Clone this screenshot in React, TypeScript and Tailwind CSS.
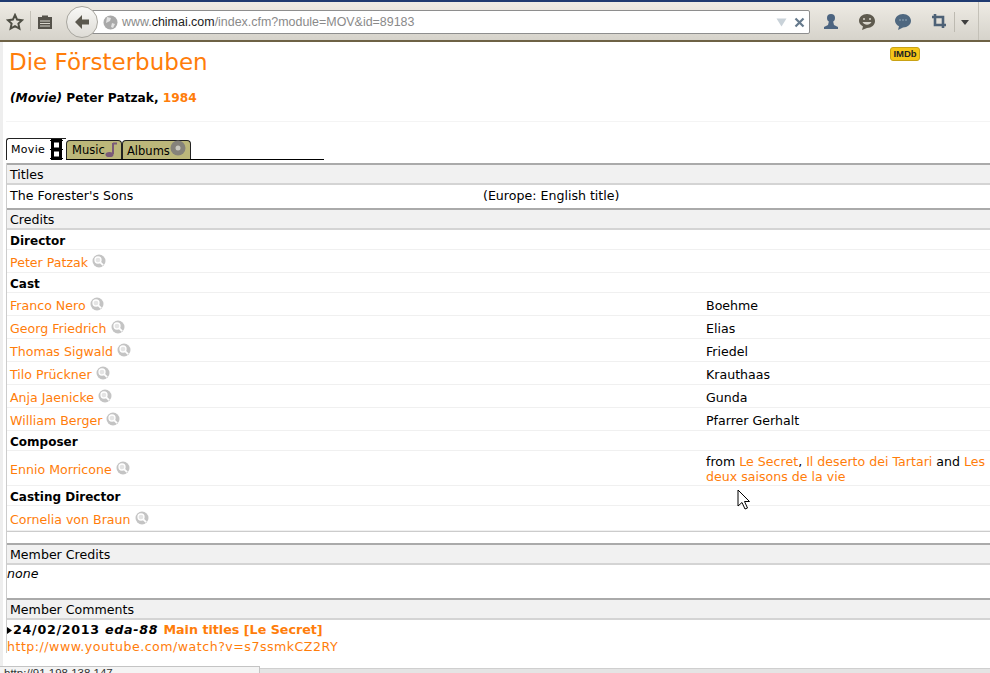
import { ReactNode } from 'react';

const orange = 'text-[#ff7d0a]';

function Lens() {
  return (
    <svg className="absolute top-[-13px] left-[4px]" width="14" height="14" viewBox="0 0 14 14">
      <circle cx="7" cy="7" r="6.5" fill="#c4c4c4" />
      <circle cx="6" cy="6" r="3" fill="#e4e4e4" stroke="#fff" strokeWidth="1.3" />
      <path d="M8.3 8.3l2.8 2.8" stroke="#fff" strokeWidth="1.8" />
    </svg>
  );
}

function Person({ name, role, h = 'h-[23px]', roleTop = 'pt-[3px]' }: { name: string; role?: ReactNode; h?: string; roleTop?: string }) {
  return (
    <div className={`flex items-center border-b border-[#f0f0f0] ${h}`}>
      <div className="w-[699px] pl-[3px] shrink-0 pt-[5px]">
        <span className={`relative ${orange}`}>
          {name}
          <span className="relative inline-block w-[14px]"><Lens /></span>
        </span>
      </div>
      <div className={`leading-[15px] ${roleTop}`}>{role}</div>
    </div>
  );
}

function Group({ label }: { label: string }) {
  return <div className="h-[20px] pl-[3px] pt-[1px] leading-[20px] text-[12px] font-bold border-b border-[#f0f0f0]">{label}</div>;
}

function Header({ label }: { label: string }) {
  return (
    <div className="h-[22px] pl-[3px] leading-[19px] bg-[#f1f1f1] border-t-2 border-b-2 border-t-[#aaaaaa] border-b-[#d4d4d4]">
      {label}
    </div>
  );
}

function Toolbar() {
  return (
    <div className="h-[42px] bg-gradient-to-b from-[#eeebe4] to-[#d6d3cb] border-t-2 border-t-[#1f3a70] border-b-2 border-b-[#6e6245] flex items-center relative overflow-visible">
      <svg className="ml-[6px] mt-[1px]" width="18" height="18" viewBox="0 0 18 18">
        <path d="M9 2l2.1 4.6 5 .6-3.7 3.4 1 5L9 13.1 4.6 15.6l1-5L1.900 7.200l5-.6z" fill="none" stroke="#4e4e44" strokeWidth="2" />
      </svg>
      <div className="w-px h-[20px] bg-[#c4c1b8] ml-[6px]" />
      <svg className="ml-[6px] mt-[1px]" width="16" height="16" viewBox="0 0 16 16">
        <path d="M1 3h14v12H1z" fill="#55524a" />
        <path d="M5 1.500h6v3H5z" fill="#55524a" />
        <path d="M3 7h10M3 9.500h10M3 12h10" stroke="#d8d5cc" strokeWidth="1" />
      </svg>
      <div className="absolute left-[90px] top-[8px] w-[720px] h-[24px] bg-white border border-[#8e8e8e] rounded-[2px] flex items-center pl-[12px] text-[12.450px] font-['Liberation_Sans',sans-serif] text-[#8a8a8a]">
        <svg width="15" height="15" viewBox="0 0 15 15">
          <circle cx="7.500" cy="7.500" r="7" fill="#a9a9a9" />
          <path d="M4 2l4 1-1 3-4 2zM9 8l3 1-2 4-2-1z" fill="#e2e2e2" />
        </svg>
        <span className="ml-[4px]">www.<span className="text-[#222]">chimai.com</span>/index.cfm?module=MOV&amp;id=89183</span>
        <svg className="absolute left-[685px] top-[7px]" width="11" height="9" viewBox="0 0 11 9">
          <path d="M0.500 0.500h10L5.500 8.500z" fill="#c9d2d9" />
        </svg>
        <svg className="absolute left-[703px] top-[6px]" width="11" height="11" viewBox="0 0 11 11">
          <path d="M1.500 1.500l8 8M9.500 1.500l-8 8" stroke="#65798c" strokeWidth="2.200" />
        </svg>
      </div>
      <div className="absolute left-[66px] top-[4px] w-[32px] h-[32px] rounded-full bg-gradient-to-b from-[#f8f8f6] to-[#dedcd6] border border-[#a8a69f] flex items-center justify-center">
        <svg width="18" height="16" viewBox="0 0 18 16">
          <path d="M9 1L2 8l7 7V10.500h7v-5H9z" fill="#5b584e" />
        </svg>
      </div>
      <svg className="absolute left-[823px] top-[11px]" width="16" height="17" viewBox="0 0 16 17">
        <circle cx="8" cy="5" r="4" fill="#4c6480" />
        <path d="M6 8h4l1 4 4 2v2H1v-2l4-2z" fill="#4c6480" />
      </svg>
      <svg className="absolute left-[858px] top-[11px]" width="18" height="18" viewBox="0 0 18 18">
        <path d="M9 1c4.500 0 8 3 8 7s-3.500 7-8 7l-5 2 1-3.500C2.500 12 1 10.300 1 8c0-4 3.500-7 8-7z" fill="#5e5a4e" />
        <path d="M5 6h2M11 6h2" stroke="#d8d5cc" strokeWidth="1.500" />
        <path d="M4.500 9c2 3.500 7 3.500 9 0z" fill="#d8d5cc" />
      </svg>
      <svg className="absolute left-[894px] top-[11px]" width="18" height="18" viewBox="0 0 18 18">
        <path d="M9 1c4.500 0 8 3 8 6.800s-3.500 6.700-8 6.700l-5 2.500 1-3.700C2.500 12 1 10 1 7.800 1 4 4.500 1 9 1z" fill="#4f6880" />
        <path d="M5.500 7h1M8.500 7h1M11.500 7h1" stroke="#a8bac8" strokeWidth="1.500" />
      </svg>
      <svg className="absolute left-[931px] top-[11px]" width="16" height="17" viewBox="0 0 16 17">
        <path d="M4 1v11h11M1 4h11v11" fill="none" stroke="#4d6176" strokeWidth="2.600" />
      </svg>
      <div className="absolute left-[954px] top-[10px] w-px h-[20px] bg-[#bdbab1]" />
      <svg className="absolute left-[961px] top-[18px]" width="8" height="5" viewBox="0 0 8 5">
        <path d="M0 0h8L4 5z" fill="#3f3f3f" />
      </svg>
      <div className="absolute left-[978px] top-[0px] w-px h-[38px] bg-[#c4c1b8]" />
    </div>
  );
}

function Tabs() {
  return (
    <div className="w-[318px] h-[22px] border-b border-black flex items-end">
      <div className="w-[60px] h-[22px] mb-[-1px] bg-white border-t border-l border-[#222] rounded-tl-[3px] relative pl-[4px] text-[11px] leading-[22px] tracking-[0.3px]">
        Movie
        <svg className="absolute left-[43px] top-[0px]" width="13" height="21" viewBox="0 0 13 21">
          <path d="M1 0h11v21H1z" fill="#000" />
          <path d="M4 3.500h5v5H4zM4 12.500h5v5H4z" fill="#fff" />
          <path d="M0 1.500h1M12 1.500h1M0 10.500h1M12 10.500h1M0 19.500h1M12 19.500h1" stroke="#000" />
        </svg>
      </div>
      <div className="w-[56px] h-[19px] bg-[#bcb77a] border border-b-0 border-[#222] rounded-t-[4px] relative pl-[5px] text-[11.500px] leading-[18px]">
        Music
        <svg className="absolute left-[38px] top-[1px]" width="13" height="16" viewBox="0 0 13 16">
          <path d="M8 1.500h4M8 1v11" stroke="#7a5a78" strokeWidth="2" fill="none" />
          <ellipse cx="4.500" cy="12.500" rx="4" ry="2.600" fill="#7a5a78" />
        </svg>
      </div>
      <div className="w-[69px] h-[19px] bg-[#bcb77a] border border-b-0 border-[#222] rounded-t-[4px] relative pl-[4px] text-[11.500px] leading-[20px]">
        Albums
        <svg className="absolute left-[47px] top-[-1px]" width="16" height="16" viewBox="0 0 16 16">
          <circle cx="8" cy="8" r="7.500" fill="#85827a" />
          <circle cx="8" cy="8" r="2.500" fill="#c9c8c0" />
        </svg>
      </div>
    </div>
  );
}

export default function App() {
  return (
    <div className="w-[990px] h-[673px] overflow-hidden relative bg-white text-black text-[12.600px] font-['DejaVu_Sans',Verdana,sans-serif]">
      <Toolbar />
      <div className="border-l-[3px] border-l-[#eeeeee] pl-[3px] h-[631px]">
        <div className="h-[96px] relative">
          <div className={`pl-[3px] pt-[6px] text-[23px] leading-[29px] ${orange}`}>
            Die Försterbuben
          </div>
          <div className="pl-[4px] mt-[13px] text-[12.200px] font-bold leading-[16px]">
            <span className="italic">(Movie)</span> Peter Patzak, <span className={orange}>1984</span>
          </div>
          <div className="absolute left-[884px] top-[5px] w-[30px] h-[14px] rounded-[3px] bg-[#f5c518] border border-[#c9a215] flex items-center justify-center text-[9.500px] font-bold leading-none text-[#222] font-['Liberation_Sans',sans-serif]">
            IMDb
          </div>
          <div className="absolute left-0 right-0 top-[79px] border-t border-[#f4f4f4]" />
        </div>

        <Tabs />

        <div className="mt-[3px] border-l border-[#cccccc]">
          <Header label="Titles" />
          <div className="h-[23px] flex items-center pl-[3px]">
            <div className="w-[473px]">The Forester's Sons</div>
            <div>(Europe: English title)</div>
          </div>
          <Header label="Credits" />
          <Group label="Director" />
          <Person name="Peter Patzak" />
          <Group label="Cast" />
          <Person name="Franco Nero" role="Boehme" />
          <Person name="Georg Friedrich" role="Elias" />
          <Person name="Thomas Sigwald" role="Friedel" />
          <Person name="Tilo Prückner" role="Krauthaas" />
          <Person name="Anja Jaenicke" role="Gunda" />
          <Person name="William Berger" role="Pfarrer Gerhalt" />
          <Group label="Composer" />
          <Person
            name="Ennio Morricone"
            h="h-[35px]"
            roleTop="pt-[1px]"
            role={
              <>
                from <span className={orange}>Le Secret</span>, <span className={orange}>Il deserto dei Tartari</span> and <span className={orange}>Les deux saisons de la vie</span>
              </>
            }
          />
          <Group label="Casting Director" />
          <Person name="Cornelia von Braun" h="h-[25px]" />
          <div className="h-[12px] border-t border-[#cccccc]" />
          <Header label="Member Credits" />
          <div className="h-[33px] italic leading-[18px]">none</div>
          <Header label="Member Comments" />
          <div className="font-bold text-[12.700px] leading-[20px] flex items-center">
            <svg width="5" height="7" viewBox="0 0 5 7"><path d="M0 0l5 3.500L0 7z" fill="#000" /></svg>
            <span className="ml-[1px] tracking-[0.7px]">24/02/2013 <span className="italic">eda-88</span></span>
            <span className={`ml-[5px] ${orange}`}>Main titles [Le Secret]</span>
          </div>
          <div className={`${orange} leading-[13px] tracking-[0.5px]`}>http://www.youtube.com/watch?v=s7ssmkCZ2RY</div>
        </div>
      </div>

      <svg className="absolute left-[737px] top-[489px]" width="14" height="22" viewBox="0 0 14 22">
        <path d="M1 1v16l4-3.500 3 6.500 2.500-1-3-6.500H12.500z" fill="#fff" stroke="#000" strokeWidth="1" />
      </svg>

      <div className="absolute left-0 bottom-0 w-full h-[5px] bg-[#e4e4e4] border-t border-[#cfcfcf]" />
      <div className="absolute left-0 bottom-0 w-[260px] h-[7px] bg-[#f4f4f4] border-t border-r border-[#c4c4c4] overflow-hidden pl-[4px] text-[11.500px] leading-[12px] text-[#333] font-['Liberation_Sans',sans-serif]">
        http://91.198.138.147
      </div>
    </div>
  );
}
